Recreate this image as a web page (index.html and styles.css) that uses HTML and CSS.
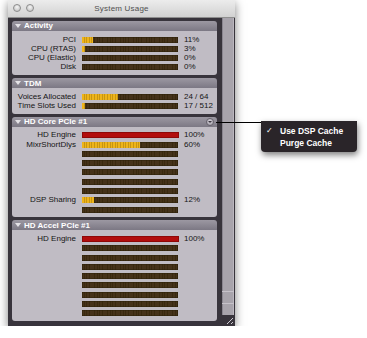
FILE: index.html
```html
<!DOCTYPE html>
<html lang="en">
<head>
    <meta charset="UTF-8">
    <meta name="viewport" content="width=device-width, initial-scale=1.0">
    <title>System Usage</title>
    <link rel="stylesheet" href="styles.css">
</head>
<body>
    <div class="window">
        <header class="titlebar">
            <span class="lights"><i></i><i></i></span>
            <span class="title">System Usage</span>
            <span></span>
        </header>
        <div class="frame">
            <div class="panels">
                <section class="group">
                    <div class="group-head"><span class="tri"></span>Activity</div>
                    <div class="group-body">
                        <div class="row"><span class="label">PCI</span><span class="bar"><span class="fill" style="width: 11%;"></span></span><span class="value">11%</span></div>
                        <div class="row"><span class="label">CPU (RTAS)</span><span class="bar"><span class="fill" style="width: 3%;"></span></span><span class="value">3%</span></div>
                        <div class="row"><span class="label">CPU (Elastic)</span><span class="bar"></span><span class="value">0%</span></div>
                        <div class="row"><span class="label">Disk</span><span class="bar"></span><span class="value">0%</span></div>
                    </div>
                </section>
                <section class="group">
                    <div class="group-head"><span class="tri"></span>TDM</div>
                    <div class="group-body">
                        <div class="row"><span class="label">Voices Allocated</span><span class="bar"><span class="fill" style="width: 37.5%;"></span></span><span class="value">24 / 64</span></div>
                        <div class="row"><span class="label">Time Slots Used</span><span class="bar"><span class="fill" style="width: 3%;"></span></span><span class="value">17 / 512</span></div>
                    </div>
                </section>
                <section class="group">
                    <div class="group-head"><span class="tri"></span>HD Core PCIe #1
                        <span class="menu-btn">
                            <span class="callout"></span>
                            <div class="popup">
                                <div class="popup-item"><span class="check">✓</span>Use DSP Cache</div>
                                <div class="popup-item"><span class="check"></span>Purge Cache</div>
                            </div>
                        </span>
                    </div>
                    <div class="group-body">
                        <div class="row"><span class="label">HD Engine</span><span class="bar full"></span><span class="value">100%</span></div>
                        <div class="row"><span class="label">MixrShortDlys</span><span class="bar"><span class="fill" style="width: 60%;"></span></span><span class="value">60%</span></div>
                        <div class="row"><span class="label"></span><span class="bar"></span></div>
                        <div class="row"><span class="label"></span><span class="bar"></span></div>
                        <div class="row"><span class="label"></span><span class="bar"></span></div>
                        <div class="row"><span class="label"></span><span class="bar"></span></div>
                        <div class="row"><span class="label"></span><span class="bar"></span></div>
                        <div class="row"><span class="label">DSP Sharing</span><span class="bar"><span class="fill" style="width: 12%;"></span></span><span class="value">12%</span></div>
                        <div class="row"><span class="label"></span><span class="bar"></span></div>
                    </div>
                </section>
                <section class="group">
                    <div class="group-head"><span class="tri"></span>HD Accel PCIe #1</div>
                    <div class="group-body">
                        <div class="row"><span class="label">HD Engine</span><span class="bar full"></span><span class="value">100%</span></div>
                        <div class="row"><span class="label"></span><span class="bar"></span></div>
                        <div class="row"><span class="label"></span><span class="bar"></span></div>
                        <div class="row"><span class="label"></span><span class="bar"></span></div>
                        <div class="row"><span class="label"></span><span class="bar"></span></div>
                        <div class="row"><span class="label"></span><span class="bar"></span></div>
                        <div class="row"><span class="label"></span><span class="bar"></span></div>
                        <div class="row"><span class="label"></span><span class="bar"></span></div>
                        <div class="row"><span class="label"></span><span class="bar"></span></div>
                    </div>
                </section>
            </div>
            <div class="scrollbar">
                <div class="track"></div>
                <div class="arrow"></div>
                <div class="arrow"></div>
            </div>
        </div>
        <span class="grip"></span>
    </div>
</body>
</html>
```

FILE: styles.css
```css
body {
    margin: 0;
    background-color: #fff;
    font-family: "Liberation Sans", Arial, sans-serif;
}
.window {
    position: relative;
    width: 227px;
    height: 326px;
    margin-left: 8px;
    display: flex;
    flex-direction: column;
    background-color: #38343c;
    box-shadow: 0 3px 9px rgba(0, 0, 0, 0.5);
}
.titlebar {
    height: 18px;
    display: grid;
    grid-template-columns: 1fr auto 1fr;
    align-items: center;
    background: linear-gradient(#ececec, #d2d2d2);
    border-bottom: 1px solid #8e8e8e;
    box-sizing: border-box;
}
.lights {
    display: flex;
    gap: 5px;
    padding-left: 5px;
}
.lights i {
    width: 8px;
    height: 8px;
    border-radius: 50%;
    box-sizing: border-box;
    border: 1px solid #8c8c8c;
    background: radial-gradient(circle at 50% 35%, #f4f4f4, #bcbcbc);
}
.title {
    font-size: 8px;
    color: #505050;
    letter-spacing: 0.2px;
}
.frame {
    flex: 1;
    display: flex;
    gap: 5px;
    padding: 3px 1px 5px 4px;
}
.panels {
    width: 205px;
    display: flex;
    flex-direction: column;
    gap: 3px;
}
.group-head {
    height: 10px;
    display: flex;
    align-items: center;
    gap: 3px;
    padding-left: 3px;
    background: linear-gradient(#9c98a2, #7c7884);
    border-radius: 3px 3px 0 0;
    color: #fff;
    font-size: 8px;
    font-weight: bold;
}
.tri {
    width: 0;
    height: 0;
    border-left: 3px solid transparent;
    border-right: 3px solid transparent;
    border-top: 4px solid #e4e2e6;
}
.group-body {
    background-color: #c0bcc4;
    padding: 4px 0 3px;
    border-radius: 0 0 3px 3px;
}
.row {
    height: 9.3px;
    display: flex;
    align-items: center;
    font-size: 8px;
    line-height: 1;
    color: #151515;
}
.label {
    width: 70px;
    padding-right: 6px;
    box-sizing: border-box;
    text-align: right;
    white-space: nowrap;
}
.bar {
    width: 96px;
    height: 6px;
    display: flex;
    background: repeating-linear-gradient(90deg, #45321a 0 1.8px, #39290f 1.8px 2.6px);
    box-shadow: inset 0 0 0 0.5px #2c2008;
}
.bar.full {
    width: 97px;
    background: #b20d0d;
    box-shadow: inset 0 0 0 1px #8e0808;
}
.fill {
    height: 100%;
    background: repeating-linear-gradient(90deg, #eeb41a 0 1.7px, #c79512 1.7px 2.6px);
}
.value {
    margin-left: 6px;
    white-space: nowrap;
}
.bar.full + .value {
    margin-left: 5px;
}
.menu-btn {
    position: relative;
    margin-left: auto;
    margin-right: 3px;
    width: 8px;
    height: 8px;
    box-sizing: border-box;
    border-radius: 50%;
    border: 1px solid #66626c;
    background: radial-gradient(circle at 50% 35%, #d8d4dc, #9a96a0);
    display: flex;
    justify-content: center;
    align-items: center;
}
.menu-btn::before {
    content: "";
    border-left: 2px solid transparent;
    border-right: 2px solid transparent;
    border-top: 2px solid #3a3640;
}
.callout {
    position: absolute;
    left: 9px;
    top: 3px;
    width: 46px;
    height: 1px;
    background-color: #000;
}
.popup {
    position: absolute;
    left: 54px;
    top: 2px;
    width: 96px;
    padding: 4px 0 3px;
    background-color: #2a2529;
    border-radius: 0 0 4px 4px;
    box-shadow: 1px 3px 6px rgba(0, 0, 0, 0.5);
    font-size: 8.5px;
    font-weight: bold;
    color: #fff;
}
.popup-item {
    height: 12.3px;
    display: flex;
    align-items: center;
    padding-left: 5px;
}
.check {
    width: 14px;
    font-family: "DejaVu Sans", sans-serif;
    font-size: 8px;
}
.scrollbar {
    width: 12px;
    margin: -3px 0 6px;
    display: flex;
    flex-direction: column;
    background-color: #a8a4ac;
    box-shadow: inset 1px 0 0 #8a8690, inset -1px 0 0 #bcb8c0;
}
.track {
    flex: 1;
}
.arrow {
    height: 11px;
    border-top: 1px solid #c6c2ca;
}
.grip {
    position: absolute;
    right: 2px;
    bottom: 2px;
    width: 9px;
    height: 9px;
    background: repeating-linear-gradient(135deg, transparent 0 2px, #d0ccd4 2px 3px);
    clip-path: polygon(100% 0, 100% 100%, 0 100%);
}
```
